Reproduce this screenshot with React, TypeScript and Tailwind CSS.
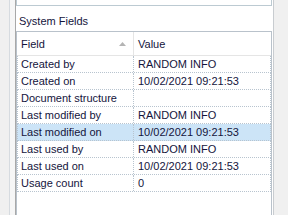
const rows = [
  { field: "Created by", value: "RANDOM INFO" },
  { field: "Created on", value: "10/02/2021 09:21:53" },
  { field: "Document structure", value: "" },
  { field: "Last modified by", value: "RANDOM INFO" },
  { field: "Last modified on", value: "10/02/2021 09:21:53", selected: true },
  { field: "Last used by", value: "RANDOM INFO" },
  { field: "Last used on", value: "10/02/2021 09:21:53" },
  { field: "Usage count", value: "0" },
];

function SortArrow() {
  return (
    <svg width="7" height="4" viewBox="0 0 7 4" className="block">
      <polygon points="3.5,0 7,4 0,4" fill="#b4b4b4" />
    </svg>
  );
}

export default function App() {
  return (
    <div className="w-[288px] h-[215px] bg-[#f0f0f0] flex overflow-hidden font-['Liberation_Sans',Arial,sans-serif] text-[11px] text-[#14143c]">
      <div className="w-[9px] shrink-0" />
      {/* panel */}
      <div className="w-[265px] h-full shrink-0 flex bg-white border-l border-l-[#d6dbe0] border-r border-r-[#c8ccd0]">
        <div className="w-[5px] shrink-0 bg-[#f6f6f6]" />
        <div className="flex-1 flex flex-col border-l border-l-[#a8a8a8]">
          {/* top box (scrolled) */}
          <div className="h-[6px] w-[256px] border-x border-b border-[#bccad2]" />

          <div className="mt-[9px] pl-[3px] leading-[13px]">System Fields</div>

          {/* grid */}
          <div className="mt-[3px] w-[256px] flex-1 flex flex-col border-t border-x border-[#b9c2cb]">
            <div className="h-[24px] flex border-b border-[#e5e5e5]">
              <div className="w-[117px] flex items-center justify-between pl-[4px] pr-[7px] border-r border-[#e5e5e5]">
                <span className="leading-[16px]">Field</span>
                <SortArrow />
              </div>
              <div className="flex-1 flex items-center pl-[4px]">
                <span className="leading-[16px]">Value</span>
              </div>
            </div>

            {rows.map((r) => (
              <div
                key={r.field}
                className={
                  "h-[17px] flex border-b border-dotted border-b-[#b8c4cf] border-l border-l-[#b8c4cf] border-r border-r-[#b8c4cf] " +
                  (r.selected ? "bg-[#cce4f7]" : "")
                }
              >
                <div className="w-[116px] shrink-0 pl-[3px] leading-[16px] border-r border-dotted border-r-[#b8c4cf] whitespace-nowrap">
                  {r.field}
                </div>
                <div className="flex-1 pl-[4px] leading-[16px] whitespace-nowrap">{r.value}</div>
              </div>
            ))}
          </div>
        </div>
      </div>
    </div>
  );
}
